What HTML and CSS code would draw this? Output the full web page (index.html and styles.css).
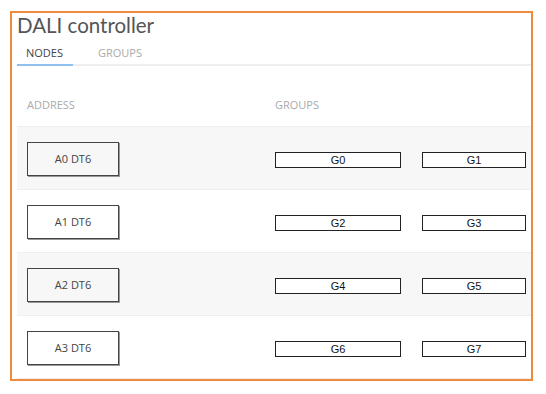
FILE: index.html
```html
<!DOCTYPE html>
<html>
<head>
<meta charset="utf-8">
<link rel="stylesheet" href="styles.css">
</head>
<body>
<div class="frame">
  <h1 class="title">DALI controller</h1>
  <div class="tabs">
    <div class="tab active">NODES</div>
    <div class="tab">GROUPS</div>
  </div>
  <div class="table">
    <div class="row head">
      <div class="cell addr">ADDRESS</div>
      <div class="cell groups">GROUPS</div>
    </div>
    <div class="row shaded">
      <div class="cell addr"><div class="node">A0 DT6</div></div>
      <div class="cell groups"><div class="grp wide">G0</div><div class="grp narrow">G1</div></div>
    </div>
    <div class="row">
      <div class="cell addr"><div class="node">A1 DT6</div></div>
      <div class="cell groups"><div class="grp wide">G2</div><div class="grp narrow">G3</div></div>
    </div>
    <div class="row shaded">
      <div class="cell addr"><div class="node">A2 DT6</div></div>
      <div class="cell groups"><div class="grp wide">G4</div><div class="grp narrow">G5</div></div>
    </div>
    <div class="row">
      <div class="cell addr"><div class="node">A3 DT6</div></div>
      <div class="cell groups"><div class="grp wide">G6</div><div class="grp narrow">G7</div></div>
    </div>
  </div>
</div>
</body>
</html>
```
FILE: styles.css
```css
html, body {
  margin: 0;
  padding: 0;
  background: #fff;
}
body {
  font-family: "Open Sans", "Noto Sans", sans-serif;
}
.frame {
  box-sizing: border-box;
  margin: 11px 0 0 10px;
  width: 523px;
  height: 370px;
  border: 2px solid #f08a3c;
  padding: 0 0 0 5px;
  overflow: hidden;
}
.title {
  margin: 0;
  font-family: Lato, "Open Sans", sans-serif;
  font-weight: 400;
  font-size: 20.5px;
  line-height: 24px;
  color: #555;
}
.tabs {
  display: flex;
  margin-top: 8px;
  border-bottom: 2px solid #eeeeee;
}
.tab {
  font-size: 11px;
  line-height: 15px;
  padding: 0 10px 4px 9px;
  color: #aaa;
  margin-bottom: -2px;
  border-bottom: 2px solid transparent;
}
.tab.active {
  color: #444;
  border-bottom-color: #90c1ee;
  margin-right: 16px;
}
.table {
  display: flex;
  flex-direction: column;
}
.row {
  display: flex;
  height: 62px;
  border-bottom: 1px solid #eeeeee;
}
.row.shaded {
  background: #f7f7f7;
}
.row.head {
  height: 60px;
}
.cell {
  box-sizing: border-box;
  flex-shrink: 0;
  padding: 0 10px;
}
.cell.addr {
  width: 248px;
  padding-top: 15px;
}
.cell.groups {
  display: flex;
  gap: 21px;
  padding-top: 25px;
}
.head .cell {
  font-size: 11px;
  line-height: 15px;
  color: #aaa;
  padding-top: 31px;
}
.node {
  box-sizing: border-box;
  width: 92px;
  height: 34px;
  border: 1px solid #444;
  box-shadow: 1px 1px 0 #999;
  font-size: 11px;
  line-height: 32px;
  text-align: center;
  color: #444;
}
.grp {
  box-sizing: border-box;
  flex-shrink: 0;
  height: 16px;
  border: 1px solid #222;
  background: #fff;
  font-family: "Liberation Sans", Arial, sans-serif;
  font-size: 11px;
  line-height: 14px;
  text-align: center;
  color: #111;
}
.grp.wide {
  width: 126px;
}
.grp.narrow {
  width: 104px;
}
```
